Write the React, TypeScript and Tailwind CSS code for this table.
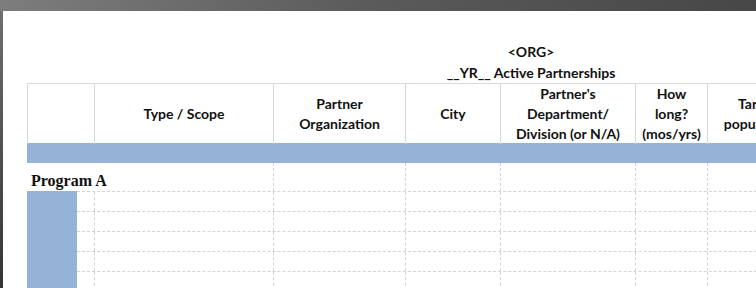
const cols = "grid-cols-[67px_179px_132px_95px_135px_72px_100px]";

const headers: string[][] = [
  [],
  ["Type / Scope"],
  ["Partner", "Organization"],
  ["City"],
  ["Partner's", "Department/", "Division (or N/A)"],
  ["How", "long?", "(mos/yrs)"],
  ["Target", "population"],
];

const bodyRows = [0, 1, 2, 3, 4];

export default function App() {
  return (
    <div className="w-[756px] h-[288px] overflow-hidden flex flex-col bg-gradient-to-r from-[#7d7d7d] via-[#5a5a5a] to-[#474747]">
      <div className="h-[11px] shrink-0" />
      <div className="flex flex-1">
        <div className="w-[3px] shrink-0 bg-gradient-to-b from-[#6f6f6f] to-[#343434]" />
        <div className="flex-1 bg-white pl-[24px] pt-[30px] overflow-hidden">
          {/* title */}
          <div
            className="ml-[354px] w-[300px] text-center font-bold text-[14px] leading-[21px] text-[#111]"
            style={{ fontFamily: "Lato, 'Open Sans', sans-serif" }}
          >
            <div>&lt;ORG&gt;</div>
            <div>__YR__ Active Partnerships</div>
          </div>

          <div className="w-[780px]">
            {/* header */}
            <div
              className={`grid ${cols} h-[60px] border-t border-[#d3d9e3] font-bold text-[14px] leading-[20px] text-[#111]`}
              style={{ fontFamily: "Lato, 'Open Sans', sans-serif" }}
            >
              {headers.map((lines, i) => (
                <div
                  key={i}
                  className="border-l border-[#d3d9e3] flex flex-col items-center justify-center text-center whitespace-nowrap"
                >
                  {lines.map((l) => (
                    <div key={l}>{l}</div>
                  ))}
                </div>
              ))}
            </div>

            {/* blue band */}
            <div className="h-[20px] bg-[#95b3d7]" />

            {/* program row */}
            <div className="grid grid-cols-[246px_132px_95px_135px_72px_100px] h-[28px]">
              <div
                className="flex items-end pl-[4px] font-bold text-[16px] leading-[20px] text-[#111]"
                style={{ fontFamily: "'Liberation Serif', serif" }}
              >
                Program A
              </div>
              {[0, 1, 2, 3, 4].map((i) => (
                <div key={i} className="border-l border-dashed border-[#d4d4d4]" />
              ))}
            </div>

            {/* body rows */}
            <div className="flex">
              <div className="w-[50px] shrink-0 bg-[#95b3d7]" />
              <div className="flex-1">
                {bodyRows.map((r) => (
                  <div
                    key={r}
                    className="grid grid-cols-[17px_179px_132px_95px_135px_72px_100px] h-[20px] border-t border-dashed border-[#d4d4d4]"
                  >
                    <div />
                    {[0, 1, 2, 3, 4, 5].map((i) => (
                      <div key={i} className="border-l border-dashed border-[#d4d4d4]" />
                    ))}
                  </div>
                ))}
              </div>
            </div>
          </div>
        </div>
      </div>
    </div>
  );
}
